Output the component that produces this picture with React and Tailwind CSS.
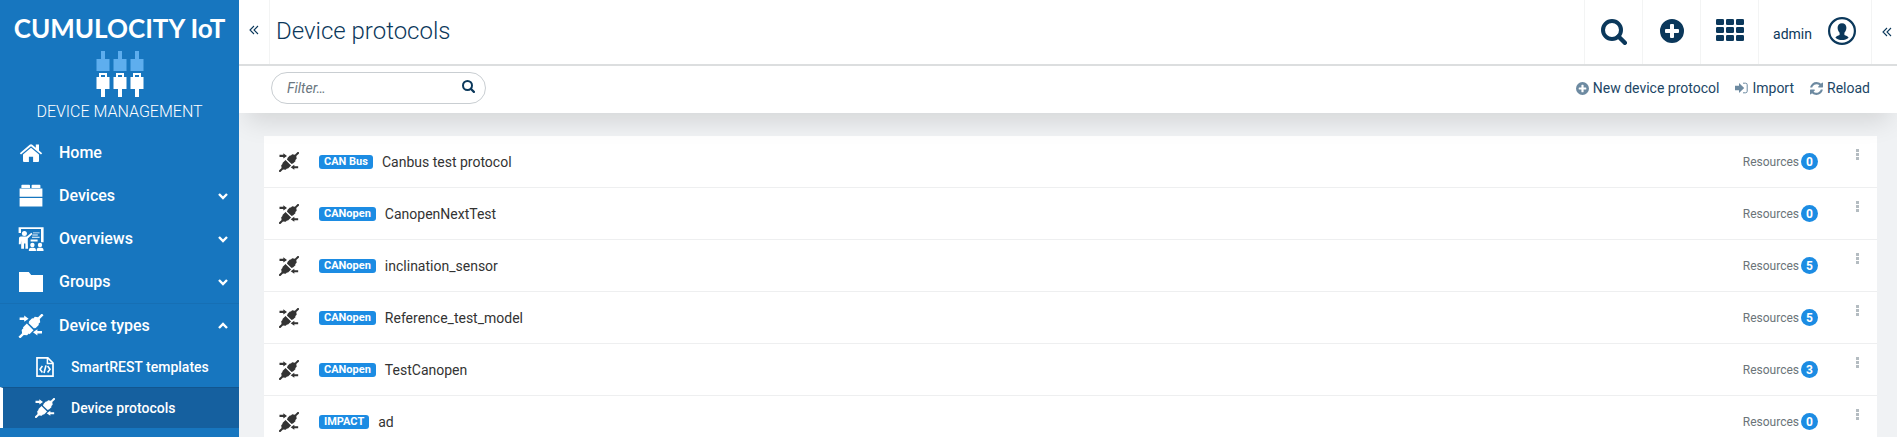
import React from "react";

function PlugIcon({ className }) {
  return (
    <svg viewBox="0 0 24 24" className={className} fill="currentColor" aria-hidden="true">
      <path d="M.6 3.400h4.600V1.600L9.600 4.700 5.200 7.800V6H.6z" />
      <path d="M23 19.600h-4.600v1.800L14 18.300l4.400-3.100V17H23z" />
      <g transform="rotate(-45 12 12)">
        <path d="M-4.500 10.800H.6L2.600 8.200h2.600V7.300h5.600v9.400H5.200v-.9H2.600L.6 13.200h-5.100z" />
        <path d="M12.400 8h1.200v-.7h5v.9h2.600l2 2.600h5.300v2.400h-5.300l-2 2.600h-2.600v.9h-5V16h-1.200z" />
      </g>
    </svg>
  );
}

function HomeIcon({ className }) {
  return (
    <svg viewBox="0 0 24 24" className={className} fill="currentColor" aria-hidden="true">
      <path d="M12 6.800 4 13.400V20q0 1 1 1h4.900v-5.200h4.200V21H19q1 0 1-1v-6.600z" />
      <path d="M23.200 12.200 20 9.500V3.600h-3.200v3.200L13.300 3.800q-1.300-1-2.600 0L.8 12.200l1.200 1.300 10-8.200 10 8.200z" />
    </svg>
  );
}

function DevicesIcon({ className }) {
  return (
    <svg viewBox="0 0 24 24" className={className} fill="currentColor" aria-hidden="true">
      <path d="M2.400 1.600q0-.8.8-.8h7q.8 0 .8.8V4H2.400zM12.600 1.600q0-.8.8-.8h7.200q.8 0 .8.8V4h-8.800zM.6 4.600h22.800v8.200H.6zM.6 14h22.800v8.400H.6z" />
    </svg>
  );
}

function OverviewsIcon({ className }) {
  return (
    <svg viewBox="0 0 26 24" className={className} fill="currentColor" aria-hidden="true">
      <path d="M.6.2h25v15H23V2H3v4H.6z" />
      <path d="M12.600 12.600h7v1.800h-7zM15 5.400h6.600v.9H15zM14.400 7.600h5.400v.9h-5.400zM14 9.800h7.600v.9H14z" />
      <circle cx="6.400" cy="6.600" r="2.500" />
      <path d="M1 11q0-1.600 1.800-1.600h6l4.600-3.600 1 1.200-4.600 4.600v4.200l.2 6H7.400V16.600H6v5.200H3.200v-8l-.4 3.400H.8z" />
      <circle cx="14.400" cy="18" r="2.200" />
      <circle cx="22" cy="18" r="2.200" />
      <path d="M10.800 24q0-3.200 2.200-3.200h2.800q2.200 0 2.200 3.200zM18.600 24q0-3.200 2-3.200h2.800q2.200 0 2.200 3.200z" />
    </svg>
  );
}

function FolderIcon({ className }) {
  return (
    <svg viewBox="0 0 24 24" className={className} fill="currentColor" aria-hidden="true">
      <path d="M0 2h9.800l2.400 3H24v17H0z" />
    </svg>
  );
}

function TemplateIcon({ className }) {
  return (
    <svg viewBox="0 0 18 20" className={className} fill="none" stroke="currentColor" aria-hidden="true">
      <path d="M1 .8h10.800L17 6v13.200H1z" strokeWidth="1.700" />
      <path d="M11.400 1v5.400H17" strokeWidth="1.500" />
      <path d="M6.400 9 4 12.200l2.400 3.200M11.600 9l2.400 3.200-2.400 3.200M10 8.400 8 16" strokeWidth="1.600" />
    </svg>
  );
}

function SearchIcon({ className }) {
  return (
    <svg viewBox="0 0 26 26" className={className} fill="none" stroke="currentColor" aria-hidden="true">
      <circle cx="11" cy="11" r="9" strokeWidth="4" />
      <path d="m17.500 17.500 6.300 6.300" strokeWidth="4.400" strokeLinecap="round" />
    </svg>
  );
}

function PlusCircleIcon({ className }) {
  return (
    <svg viewBox="0 0 24 24" className={className} fill="currentColor" aria-hidden="true">
      <path
        fillRule="evenodd"
        d="M12 0a12 12 0 1 1 0 24 12 12 0 0 1 0-24zM11 5q-1 0-1 1v4H6q-1 0-1 1v2q0 1 1 1h4v4q0 1 1 1h2q1 0 1-1v-4h4q1 0 1-1v-2q0-1-1-1h-4V6q0-1-1-1z"
      />
    </svg>
  );
}

function GridIcon({ className }) {
  return (
    <svg viewBox="0 0 28 22" className={className} fill="currentColor" aria-hidden="true">
      {[0, 8, 16].map((y) =>
        [0, 10, 20].map((x) => <rect key={`${x}-${y}`} x={x} y={y} width="8" height="6" rx="1.300" />)
      )}
    </svg>
  );
}

function UserIcon({ className }) {
  return (
    <svg viewBox="0 0 28 28" className={className} aria-hidden="true">
      <circle cx="14" cy="14" r="12.900" fill="none" stroke="currentColor" strokeWidth="2.200" />
      <path
        fill="currentColor"
        d="M14 6.200c2.800 0 4.400 1.900 4.400 4.500 0 2.100-.9 3.700-2 5v2.400c1.600.7 3.500 1.300 4.200 2.600-1.800 1.600-4 2.300-6.600 2.300s-4.800-.7-6.600-2.300c.7-1.300 2.600-1.900 4.200-2.600v-2.400c-1.100-1.300-2-2.900-2-5 0-2.600 1.600-4.500 4.400-4.500z"
      />
    </svg>
  );
}

function DoubleLeftIcon({ className }) {
  return (
    <svg viewBox="0 0 10 10" className={className} fill="none" stroke="currentColor" strokeWidth="1.100" aria-hidden="true">
      <path d="M5 1 1 5l4 4M9 1 5 5l4 4" />
    </svg>
  );
}

function ChevronIcon({ up }) {
  return (
    <svg viewBox="0 0 10 8" className="h-2 w-2.5" fill="none" stroke="currentColor" strokeWidth="2.400" aria-hidden="true">
      <path d={up ? "M1 6l4-4 4 4" : "M1 2l4 4 4-4"} />
    </svg>
  );
}

function ImportIcon({ className }) {
  return (
    <svg viewBox="0 0 13 12" className={className} fill="currentColor" aria-hidden="true">
      <path d="M0 3.800h4V1L9.200 6 4 11V8.200H0z" />
      <path d="M8 1.200h2.600q1.600 0 1.600 1.600v6.400q0 1.600-1.600 1.600H8" fill="none" stroke="currentColor" strokeWidth="1" />
    </svg>
  );
}

function ReloadIcon({ className }) {
  return (
    <svg viewBox="0 0 1536 1536" className={className} fill="currentColor" aria-hidden="true">
      <path d="M1511 928q0 5-1 7-64 268-268 434.500t-478 166.500q-146 0-282.500-55t-243.500-157l-129 129q-19 19-45 19t-45-19-19-45v-448q0-26 19-45t45-19h448q26 0 45 19t19 45-19 45l-137 137q71 66 161 102t187 36q134 0 250-65t186-179q11-17 53-117 8-23 30-23h192q13 0 22.500 9.500t9.500 22.500zm25-800v448q0 26-19 45t-45 19h-448q-26 0-45-19t-19-45 19-45l138-138q-148-137-349-137-134 0-250 65t-186 179q-11 17-53 117-8 23-30 23h-199q-13 0-22.500-9.500t-9.500-22.500v-7q65-268 270-434.500t480-166.500q146 0 284 55.500t245 156.500l130-129q19-19 45-19t45 19 19 45z" />
    </svg>
  );
}

function ConnectorsLogo() {
  return (
    <svg viewBox="0 0 48 47" className="h-[47px] w-12" aria-hidden="true">
      {[0, 17, 34].map((x) => (
        <g key={x} transform={`translate(${x} 0)`}>
          <path fill="#5eaeee" d="M5 0h4v8h4.500v12H.5V8H5z" />
          <path fill="#fff" fillRule="evenodd" d="M3 22h8v4h2.500v12H9v8H5v-8H.5V26H3zM5 24v2h4v-2z" />
        </g>
      ))}
    </svg>
  );
}

const navItems = [
  { label: "Home", Icon: HomeIcon },
  { label: "Devices", Icon: DevicesIcon, expandable: true },
  { label: "Overviews", Icon: OverviewsIcon, expandable: true },
  { label: "Groups", Icon: FolderIcon, expandable: true },
];

const protocols = [
  { type: "CAN Bus", name: "Canbus test protocol", resources: 0 },
  { type: "CANopen", name: "CanopenNextTest", resources: 0 },
  { type: "CANopen", name: "inclination_sensor", resources: 5 },
  { type: "CANopen", name: "Reference_test_model", resources: 5 },
  { type: "CANopen", name: "TestCanopen", resources: 3 },
  { type: "IMPACT", name: "ad", resources: 0 },
];

function NavButton({ label, Icon, expandable, expanded }) {
  return (
    <button
      type="button"
      aria-expanded={expandable ? Boolean(expanded) : undefined}
      className="flex h-[43px] w-full items-center pr-[11px] pl-[18px] text-left text-base font-medium"
    >
      <Icon className="h-6 w-[26px]" />
      <span className="ml-[15px] flex-1">{label}</span>
      {expandable && <ChevronIcon up={expanded} />}
    </button>
  );
}

function Sidebar() {
  return (
    <aside className="w-[239px] shrink-0 bg-[#1776bf] text-white">
      <div className="flex h-[131px] flex-col items-center pt-3">
        <div className="font-['Lato',sans-serif] text-[26px] leading-8 font-bold whitespace-nowrap">CUMULOCITY IoT</div>
        <div className="mt-[7px]">
          <ConnectorsLogo />
        </div>
        <div className="mt-1 text-base leading-5 font-light">DEVICE MANAGEMENT</div>
      </div>
      <nav aria-label="Main">
        {navItems.map((item) => (
          <NavButton key={item.label} {...item} />
        ))}
        <div className="border-t border-[#166fb4]">
          <NavButton label="Device types" Icon={PlugIcon} expandable expanded />
          <a href="#smartrest" className="flex h-10 items-center pl-9 text-sm font-medium">
            <TemplateIcon className="h-5 w-[18px]" />
            <span className="ml-[17px]">SmartREST templates</span>
          </a>
          <a
            href="#protocols"
            aria-current="page"
            className="flex h-[41px] items-center border-t border-l-3 border-t-[#12568f] border-l-white bg-[#15609f] pl-8 text-sm font-medium"
          >
            <PlugIcon className="size-5" />
            <span className="ml-4">Device protocols</span>
          </a>
        </div>
      </nav>
    </aside>
  );
}

function Header() {
  const cell = "flex w-[58px] items-center justify-center border-l border-[#f3f4f4]";
  return (
    <header className="flex h-[66px] border-b-2 border-[#dcdedf]">
      <button type="button" aria-label="Collapse navigator" className="flex w-[30px] items-center justify-center pb-1">
        <DoubleLeftIcon className="size-2.5" />
      </button>
      <h1 className="flex flex-1 items-center border-l border-[#f3f4f4] pb-0.5 pl-1.5 text-2xl font-light">Device protocols</h1>
      <button type="button" aria-label="Search" className={cell}>
        <SearchIcon className="size-[26px]" />
      </button>
      <button type="button" aria-label="Create" className={cell}>
        <PlusCircleIcon className="mb-0.5 size-6" />
      </button>
      <button type="button" aria-label="Applications" className={cell}>
        <GridIcon className="mb-1 h-[22px] w-7" />
      </button>
      <button type="button" className="flex w-[113px] items-center justify-end gap-4 border-l border-[#f3f4f4] pr-[15px] pb-0.5 text-sm">
        <span className="pt-1.5">admin</span>
        <UserIcon className="size-7" />
      </button>
      <button type="button" aria-label="Open drawer" className="flex w-[26px] items-center border-l border-[#f3f4f4] pl-2.5">
        <DoubleLeftIcon className="size-2.5" />
      </button>
    </header>
  );
}

function Toolbar() {
  return (
    <div className="flex items-center justify-between bg-white pt-1.5 pr-[27px] pb-[9px] pl-8">
      <div className="flex h-8 w-[215px] items-center rounded-full border border-[#c9ced2] pr-2.5 pl-[15px]">
        <input
          type="text"
          aria-label="Filter protocols"
          placeholder="Filter…"
          className="w-full min-w-0 flex-1 bg-transparent text-sm italic outline-none placeholder:text-[#6b7780]"
        />
        <SearchIcon className="mb-1 size-[13px]" />
      </div>
      <div className="flex items-center gap-4 text-sm text-[#1b4666]">
        <button type="button" className="flex items-center gap-1">
          <PlusCircleIcon className="size-[13px] text-[#6d8aa1]" />
          New device protocol
        </button>
        <button type="button" className="flex items-center gap-1">
          <ImportIcon className="h-3 w-[13px] text-[#6d8aa1]" />
          Import
        </button>
        <button type="button" className="flex items-center gap-1">
          <ReloadIcon className="size-[13px] text-[#6d8aa1]" />
          Reload
        </button>
      </div>
    </div>
  );
}

function ProtocolRow({ type, name, resources }) {
  return (
    <li className="flex h-[52px] items-center border-b border-[#eeeff0] pr-[17px] pl-[15px] text-[#333]">
      <PlugIcon className="size-5" />
      <span className="ml-5 rounded-[3px] bg-[#1c8ce3] px-[5px] text-[11px] leading-[14px] font-bold text-white">{type}</span>
      <a href={`#${name}`} className="ml-[9px] flex-1 text-sm">
        {name}
      </a>
      <span className="flex items-center gap-0.5 text-xs text-[#6b7479]">
        Resources
        <span className="flex size-[17px] items-center justify-center rounded-full bg-[#1c8ce3] text-xs font-bold text-white">
          {resources}
        </span>
      </span>
      <button type="button" aria-label={`Actions for ${name}`} className="ml-[38px] flex w-1 flex-col gap-px pb-3.5">
        <span className="size-[3px] bg-[#b4bcc1]" />
        <span className="size-[3px] bg-[#b4bcc1]" />
        <span className="size-[3px] bg-[#b4bcc1]" />
      </button>
    </li>
  );
}

export default function App() {
  return (
    <div className="flex h-screen overflow-hidden bg-[#f0f2f4] font-['Roboto',sans-serif] text-[#0b385b]">
      <Sidebar />
      <main className="min-w-0 flex-1 overflow-hidden">
        <div className="relative z-10 bg-white shadow-[0_16px_24px_-8px_rgba(0,0,0,0.12)]">
          <Header />
          <Toolbar />
        </div>
        <ul className="mt-[23px] mr-5 ml-[25px] bg-white">
          {protocols.map((protocol) => (
            <ProtocolRow key={protocol.name} {...protocol} />
          ))}
        </ul>
      </main>
    </div>
  );
}
